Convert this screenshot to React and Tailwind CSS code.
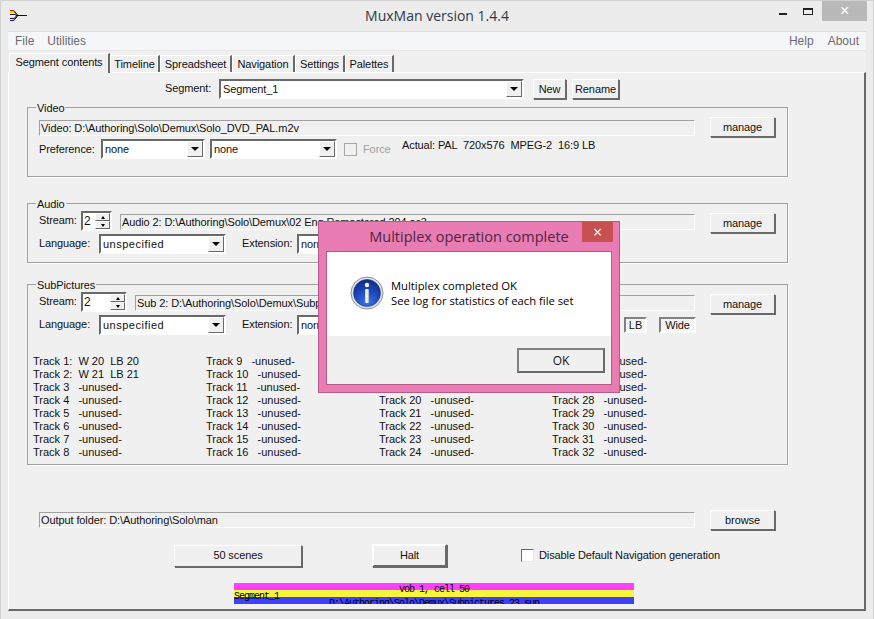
import React from 'react';

const raised = 'border border-t-white border-l-white border-r-[#696969] border-b-[#696969] shadow-[1px_1px_0_#696969]';

const Btn = ({ w, h = 'h-5', children, className = '' }) => (
  <div className={`${w} ${h} ${raised} bg-[#f0f0f0] flex items-center justify-center shrink-0 ${className}`}>{children}</div>
);

const Field = ({ w, children }) => (
  <div className={`${w} h-[16px] border border-t-[#a0a0a0] border-l-[#a0a0a0] border-r-white border-b-white pl-px leading-[14px] whitespace-nowrap overflow-hidden shrink-0`}>{children}</div>
);

const Combo = ({ w, value, className = '' }) => (
  <div className={`${w} h-5 border-2 border-t-[#696969] border-l-[#696969] border-r-white border-b-white bg-white flex items-stretch shrink-0 ${className}`}>
    <div className="flex-1 pl-[2px] leading-[17px] overflow-hidden">{value}</div>
    <div className={`w-[16px] ${raised} shadow-none bg-[#f0f0f0] flex items-center justify-center`}>
      <div className="w-0 h-0 border-x-[4px] border-x-transparent border-t-[4px] border-t-black" />
    </div>
  </div>
);

const Spinner = ({ w, value, className = '' }) => (
  <div className={`${w} h-5 border-2 border-t-[#696969] border-l-[#696969] border-r-white border-b-white bg-white flex items-stretch shrink-0 ${className}`}>
    <div className="flex-1 pl-px text-[12px] leading-[17px]">{value}</div>
    <div className="w-[15px] flex flex-col bg-[#f0f0f0]">
      {['border-b-[3px] border-b-black', 'border-t-[3px] border-t-black'].map(c => (
        <div key={c} className={`flex-1 ${raised} shadow-none flex items-center justify-center`}>
          <div className={`w-0 h-0 border-x-[2px] border-x-transparent ${c}`} />
        </div>
      ))}
    </div>
  </div>
);

const Group = ({ title, h, mt, children }) => (
  <div className={`relative ml-[18px] w-[761px] ${h} ${mt} border border-[#a0a0a0] shadow-[1px_1px_0_#fff] pl-[11px]`}>
    <span className="absolute left-2 -top-[6px] bg-[#f0f0f0] px-px leading-[13px]">{title}</span>
    {children}
  </div>
);

const Check = ({ disabled }) => (
  <div className={`w-[13px] h-[13px] border ${disabled ? 'border-[#a8a8a8] bg-[#f0f0f0]' : 'border-t-[#696969] border-l-[#696969] border-r-[#e8e8e8] border-b-[#e8e8e8] bg-white'} shrink-0`} />
);

const Toggle = ({ w, className = '', children }) => (
  <div className={`${w} h-[16px] border-2 border-t-[#808080] border-l-[#808080] border-r-white border-b-white bg-[repeating-conic-gradient(#ffffff_0_25%,#ececec_0_50%)] bg-[length:2px_2px] flex items-center justify-center leading-none shrink-0 ${className}`}>{children}</div>
);

const Unspecified = () => <span className="tracking-[0.5px]">unspecified</span>;

const trackCols = [
  ['Track 1:  W 20  LB 20', 'Track 2:  W 21  LB 21', ...[3, 4, 5, 6, 7, 8].map(n => `Track ${n}   -unused-`)],
  [9, 10, 11, 12, 13, 14, 15, 16].map(n => `Track ${n}   -unused-`),
  [17, 18, 19, 20, 21, 22, 23, 24].map(n => `Track ${n}   -unused-`),
  [25, 26, 27, 28, 29, 30, 31, 32].map(n => `Track ${n}   -unused-`),
];

const tabs = [
  ['Timeline', 'w-[50px]'],
  ['Spreadsheet', 'w-[72px]'],
  ['Navigation', 'w-[63px]'],
  ['Settings', 'w-[50px]'],
  ['Palettes', 'w-[49px]'],
];

const AppIcon = () => (
  <svg width="18" height="14" viewBox="0 0 18 14" className="shrink-0">
    <path d="M0 1.5h4l3 4" fill="none" stroke="#e01010" strokeWidth="1" />
    <path d="M0 3.5h4l3 3" fill="none" stroke="#e8d800" strokeWidth="1" />
    <path d="M0 5.5h5l2 1.5" fill="none" stroke="#111" strokeWidth="1" />
    <path d="M0 9.5h4l3-3" fill="none" stroke="#111" strokeWidth="1" />
    <path d="M0 11.5h4l3-4" fill="none" stroke="#1818d0" strokeWidth="1" />
    <path d="M6 6.5h11" stroke="#111" strokeWidth="1" />
    <path d="M4 2.5l4 4-4 4" fill="none" stroke="#111" strokeWidth="1" />
  </svg>
);

const InfoIcon = () => (
  <svg width="34" height="34" viewBox="0 0 34 34" className="shrink-0">
    <defs>
      <radialGradient id="infoFill" cx="50%" cy="85%" r="80%">
        <stop offset="0%" stopColor="#3f74e8" />
        <stop offset="60%" stopColor="#1c46b8" />
        <stop offset="100%" stopColor="#14308e" />
      </radialGradient>
      <linearGradient id="infoBar" x1="0" y1="0" x2="1" y2="0">
        <stop offset="0%" stopColor="#c8cfe0" />
        <stop offset="50%" stopColor="#ffffff" />
        <stop offset="100%" stopColor="#9aa6c6" />
      </linearGradient>
    </defs>
    <circle cx="17" cy="17" r="16" fill="#dfe3ea" stroke="#8a8f9a" strokeWidth="1" />
    <circle cx="17" cy="17" r="13.5" fill="url(#infoFill)" stroke="#1a2f78" strokeWidth="0.6" />
    <circle cx="17" cy="9" r="2.2" fill="#f4f6fb" />
    <rect x="15" y="13" width="4" height="14" rx="1" fill="url(#infoBar)" />
  </svg>
);

const App = () => (
  <div className="relative w-[874px] h-[619px] overflow-hidden bg-[#ececec] border-t border-x border-[#d2d2d2] font-['Liberation_Sans',sans-serif] text-[11px] tracking-[-0.1px] text-[#111]">
    {/* title bar */}
    <div className="relative h-[30px] flex items-center pl-[9px]">
      <AppIcon />
      <div className="absolute inset-x-0 top-[5px] text-center font-['Open_Sans',sans-serif] text-[14px] tracking-normal leading-[20px] text-[#2f3a48]">MuxMan version 1.4.4</div>
      <div className="ml-auto flex items-start self-start mr-[6px]">
        <div className="w-[8px] h-[2px] bg-[#222] mt-[12px] mr-[16px]" />
        <div className="w-[10px] h-[7px] border border-t-2 border-[#222] mt-[7px] mr-[9px]" />
        <div className="w-[45px] h-[20px] bg-[#b9b9b9] flex items-center justify-center text-white text-[16px] leading-none">×</div>
      </div>
    </div>

    {/* menu */}
    <div className="ml-[7px] mr-[7px] h-[19px] bg-[#f5f6f7] border-t border-[#dcdcdc] flex items-center text-[#6f6a72] text-[12px] tracking-normal pl-[7px]">
      <span>File</span>
      <span className="ml-[13px]">Utilities</span>
      <span className="ml-auto">Help</span>
      <span className="ml-[14px] mr-[7px]">About</span>
    </div>

    {/* tabs */}
    <div className="ml-[8px] h-[22px] flex items-end bg-[#f0f0f0] mr-[7px] border-t border-[#e6e6e6]">
      <div className="w-[101px] h-[20px] -mb-px relative z-10 bg-[#f0f0f0] border-t border-l border-white border-r-2 border-r-[#696969] flex items-center justify-center leading-none pb-[3px]">Segment contents</div>
      {tabs.map(([t, w]) => (
        <div key={t} className={`${w} h-[17px] border-t border-l border-white border-r-2 border-r-[#696969] flex items-center justify-center leading-none`}>{t}</div>
      ))}
    </div>

    {/* page */}
    <div className="ml-[7px] mr-[7px] h-[539px] bg-[#f0f0f0] border border-t-white border-l-white border-r-2 border-b-2 border-r-[#696969] border-b-[#696969]">
      <div className="flex items-center mt-[6px] h-5">
        <span className="ml-[156px] w-[54px] -mt-[2px]">Segment:</span>
        <Combo w="w-[305px]" value="Segment_1" />
        <Btn w="w-[33px]" className="ml-[9px]">New</Btn>
        <Btn w="w-[47px]" className="ml-[6px]">Rename</Btn>
      </div>

      <Group title="Video" h="h-[70px]" mt="mt-[8px]">
        <div className="flex items-center mt-[10px] h-5">
          <Field w="w-[656px]">Video: D:\Authoring\Solo\Demux\Solo_DVD_PAL.m2v</Field>
          <Btn w="w-[65px]" className="ml-[15px] -mt-[2px]">manage</Btn>
        </div>
        <div className="flex items-center mt-px h-5">
          <span className="w-[62px]">Preference:</span>
          <Combo w="w-[104px]" value="none" />
          <Combo w="w-[127px]" value="none" className="ml-[5px]" />
          <div className="ml-[7px]"><Check disabled /></div>
          <span className="ml-[6px] text-[#a0a0a0] w-[39px]">Force</span>
          <span className="whitespace-pre -mt-[7px]">Actual: PAL  720x576  MPEG-2  16:9 LB</span>
        </div>
      </Group>

      <Group title="Audio" h="h-[60px]" mt="mt-[26px]">
        <div className="flex items-center mt-[8px] h-5">
          <span className="w-[42px] -mt-[4px]">Stream:</span>
          <Spinner w="w-[31px]" value="2" className="-mt-[2px]" />
          <div className="ml-2"><Field w="w-[575px]">Audio 2: D:\Authoring\Solo\Demux\02 Eng Remastered 204.ac3</Field></div>
          <Btn w="w-[65px]" className="ml-[15px] mt-[2px]">manage</Btn>
        </div>
        <div className="flex items-center mt-[2px] h-5">
          <span className="w-[60px] -mt-[2px]">Language:</span>
          <Combo w="w-[127px]" value={<Unspecified />} />
          <span className="ml-[16px] w-[55px] -mt-[2px]">Extension:</span>
          <Combo w="w-[127px]" value="normal" />
        </div>
      </Group>

      <Group title="SubPictures" h="h-[181px]" mt="mt-[21px]">
        <div className="flex items-center mt-[7px] h-5">
          <span className="w-[42px] -mt-[2px]">Stream:</span>
          <Spinner w="w-[46px]" value="2" />
          <div className="ml-2 mt-[2px]"><Field w="w-[560px]">Sub 2: D:\Authoring\Solo\Demux\Subpictures_23.sup</Field></div>
          <Btn w="w-[65px]" className="ml-[15px] mt-[4px]">manage</Btn>
        </div>
        <div className="flex items-center mt-[3px] h-5">
          <span className="w-[60px] -mt-[2px]">Language:</span>
          <Combo w="w-[127px]" value={<Unspecified />} />
          <span className="ml-[16px] w-[55px] -mt-[2px]">Extension:</span>
          <Combo w="w-[127px]" value="normal" />
          <Toggle w="w-[23px]" className="ml-[200px]">LB</Toggle>
          <Toggle w="w-[37px]" className="ml-[12px]">Wide</Toggle>
        </div>
        <div className="flex mt-[20px] -ml-[6px] leading-[13px] tracking-normal">
          {trackCols.map((rows, i) => (
            <div key={i} className="w-[173px] whitespace-pre">
              {rows.map(r => <div key={r} className="h-[13px]">{r}</div>)}
            </div>
          ))}
        </div>
      </Group>

      <div className="flex items-center ml-[30px] mt-[45px] h-5">
        <Field w="w-[656px]">Output folder: D:\Authoring\Solo\man</Field>
        <Btn w="w-[65px]" className="ml-[15px]">browse</Btn>
      </div>

      <div className="flex items-center mt-[14px] h-[23px]">
        <Btn w="w-[128px]" h="h-[22px]" className="ml-[165px]">50 scenes</Btn>
        <Btn w="w-[75px]" h="h-[23px]" className="ml-[70px] border-2 border-t-[#808080] border-l-[#808080]">Halt</Btn>
        <div className="ml-[74px]"><Check /></div>
        <span className="ml-[5px]">Disable Default Navigation generation</span>
      </div>

      <div className="relative ml-[225px] mt-[16px] w-[400px] h-[21px] overflow-hidden font-['Liberation_Mono',monospace] text-[10px] tracking-[-1px] text-black">
        <div className="h-[7px] bg-[#ff40ff] text-center leading-[14px]">vob 1, cell 50</div>
        <div className="h-[7px] bg-[#f5f53c]">
          <div className="leading-[14px] relative z-10">Segment_1</div>
        </div>
        <div className="h-[7px] bg-[#4040ff] text-center leading-[14px]">D:\Authoring\Solo\Demux\Subpictures_23.sup</div>
      </div>
    </div>

    {/* message dialog */}
    <div className="absolute left-[317px] top-[220px] w-[302px] h-[172px] bg-[#ea7cb4] border border-[#b65a8c] flex flex-col tracking-normal">
      <div className="relative h-[29px] shrink-0 font-['Open_Sans',sans-serif] text-[14.5px] text-[#4a2742] text-center leading-[30px]">
        Multiplex operation complete
        <div className="absolute right-[6px] top-0 w-[31px] h-[20px] bg-[#c75050] flex items-center justify-center text-white text-[16px] leading-none">×</div>
      </div>
      <div className="mx-[7px] mb-[7px] flex-1 flex flex-col border border-[#b65a8c]">
        <div className="h-[84px] bg-white flex items-center pl-[23px] pb-[2px] font-['Open_Sans',sans-serif] text-[11.25px] leading-[15px] text-black">
          <InfoIcon />
          <div className="ml-[7px]">
            <div>Multiplex completed OK</div>
            <div>See log for statistics of each file set</div>
          </div>
        </div>
        <div className="flex-1 bg-[#f0f0f0] flex justify-end pt-[12px] pr-[6px]">
          <div className="w-[88px] h-[25px] border-2 border-t-[#808080] border-l-[#808080] border-r-[#696969] border-b-[#696969] bg-[#f0f0f0] flex items-center justify-center font-['Open_Sans',sans-serif] text-[12px]">OK</div>
        </div>
      </div>
    </div>
  </div>
);

export default App;
